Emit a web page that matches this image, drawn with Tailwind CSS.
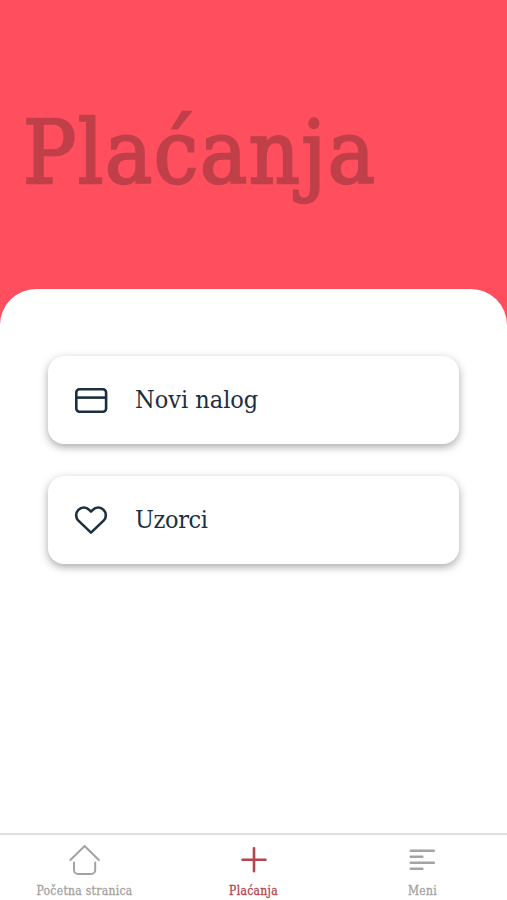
<!DOCTYPE html>
<html lang="hr">
<head>
  <meta charset="UTF-8" />
  <title>Plaćanja</title>
  <script src="https://cdn.jsdelivr.net/npm/@tailwindcss/browser@4"></script>
</head>
<body class="bg-[#ff4f5e] font-['DejaVu_Serif_Condensed','DejaVu_Serif',serif] [font-stretch:condensed]">

  <div class="h-[900px] w-[507px] flex flex-col overflow-hidden">
    <header class="h-[289px] shrink-0 pl-[23px] pt-[101px]">
      <h1 class="text-[88px] leading-[104px] tracking-[1.7px] text-[#c03f49] [-webkit-text-stroke:2.4px_#c03f49] whitespace-nowrap">Plaćanja</h1>
    </header>

    <main class="flex-1 bg-white rounded-t-[36px] px-12 pt-[67px] flex flex-col gap-8">
      <a href="#" class="h-[88px] rounded-2xl bg-white shadow-[0_3px_8px_rgba(0,0,0,0.34)] flex items-center pl-[26px] gap-[27px] text-[#1c2f40]">
        <svg class="w-[34px] h-[34px]" viewBox="0 0 34 34" fill="none" stroke="currentColor" stroke-width="2.6">
          <rect x="2.3" y="6.3" width="29.8" height="22.4" rx="3.2" />
          <path d="M2.3 14.6h29.8" />
        </svg>
        <span class="text-[25px] leading-8 pb-[1px]">Novi nalog</span>
      </a>
      <a href="#" class="h-[88px] rounded-2xl bg-white shadow-[0_3px_8px_rgba(0,0,0,0.34)] flex items-center pl-[26px] gap-[27px] text-[#1c2f40]">
        <svg class="w-[34px] h-[34px]" viewBox="0 0 34 34" fill="none" stroke="currentColor" stroke-width="2.6" stroke-linecap="round" stroke-linejoin="round">
          <path d="M29.6 6.8a7.6 7.6 0 0 0-10.8 0L17 8.6l-1.8-1.8A7.6 7.6 0 0 0 4.4 17.6L17 29.6l12.6-12a7.6 7.6 0 0 0 0-10.8z" />
        </svg>
        <span class="text-[25px] leading-8 pb-[1px] tracking-[-0.4px]">Uzorci</span>
      </a>
    </main>

    <nav class="h-[67px] shrink-0 bg-white border-t-2 border-[#dedede] grid grid-cols-3 text-[12px] leading-4 tracking-[0.3px] text-[#a3a3a3] [-webkit-text-stroke:0.3px]">
      <a href="#" class="flex flex-col items-center pt-2">
        <svg class="w-8 h-8 mb-2" viewBox="0 0 32 32" fill="none" stroke="currentColor" stroke-width="2" stroke-linecap="round" stroke-linejoin="round">
          <path d="M1.4 17 15.6 3 29.8 17" />
          <path d="M5 19.5V27a4 4 0 0 0 4 4h13.2a4 4 0 0 0 4-4v-7.5" />
        </svg>
        <span class="whitespace-nowrap">Početna stranica</span>
      </a>
      <a href="#" class="flex flex-col items-center pt-2 text-[#b5444c]">
        <svg class="w-8 h-8 mb-2" viewBox="0 0 32 32" fill="none" stroke="currentColor" stroke-width="2.6" stroke-linecap="round">
          <path d="M16 5.3v23M4.5 16.8h23" />
        </svg>
        <span>Plaćanja</span>
      </a>
      <a href="#" class="flex flex-col items-center pt-2">
        <svg class="w-8 h-8 mb-2" viewBox="0 0 32 32" fill="none" stroke="currentColor" stroke-width="2.6" stroke-linecap="round">
          <path d="M3.8 7.8h23M3.8 13.8h11.5M3.8 19.8h23M3.8 25.8h11.5" />
        </svg>
        <span>Meni</span>
      </a>
    </nav>
  </div>

</body>
</html>
